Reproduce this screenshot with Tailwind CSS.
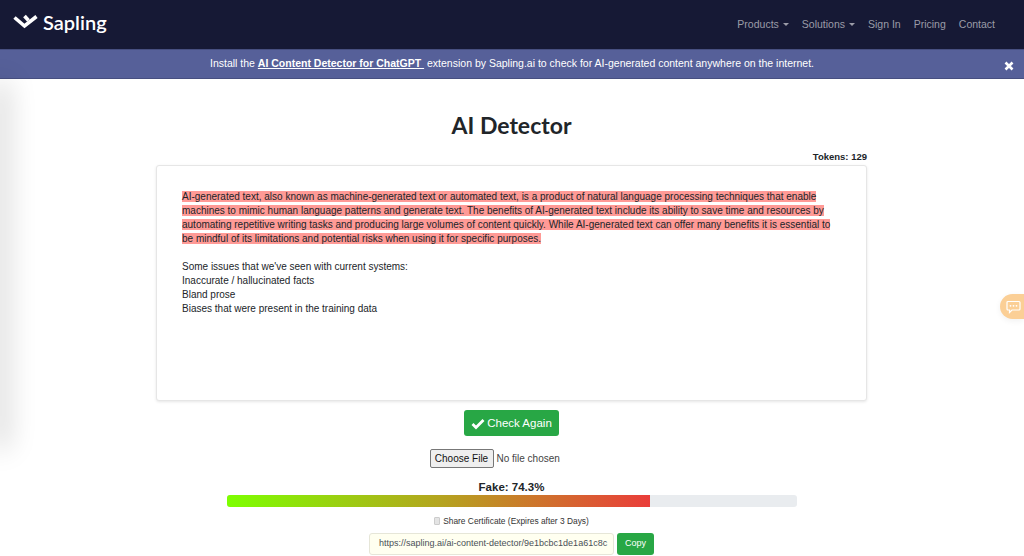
<!DOCTYPE html>
<html>
<head>
<meta charset="utf-8">
<script src="https://cdn.jsdelivr.net/npm/@tailwindcss/browser@4"></script>
</head>
<body class="relative h-[556px] overflow-hidden bg-white font-['Liberation_Sans',sans-serif] text-[#212529]">
<nav class="flex h-[49px] items-center justify-between bg-[#161935] pl-[12px] pr-[29px]">
  <div class="flex items-center gap-[4px] pb-[6px]">
    <svg class="h-[16px] w-[27px]" viewBox="0 0 27 16" fill="none"><path d="M2.5 3.5 L12.5 12 L24.5 2.5" stroke="#fff" stroke-width="3.6" stroke-linejoin="miter"/><path d="M12.5 2 L16.5 6.5" stroke="#fff" stroke-width="3.6"/></svg>
    <span class="font-['Lato',sans-serif] text-[20px] font-semibold leading-none text-white">Sapling</span>
  </div>
  <div class="flex items-center gap-[13px] text-[10.5px] text-[#9b9ca8]">
    <span class="flex items-center gap-[4px]">Products <span class="border-x-[3px] border-t-[3px] border-x-transparent border-t-[#9b9ca8]"></span></span>
    <span class="flex items-center gap-[4px]">Solutions <span class="border-x-[3px] border-t-[3px] border-x-transparent border-t-[#9b9ca8]"></span></span>
    <span>Sign In</span>
    <span>Pricing</span>
    <span>Contact</span>
  </div>
</nav>
<div class="relative flex h-[30px] items-center justify-center border-y border-y-[#474f80] bg-[#566099] text-[10.5px] text-white">
  <p>Install the <a class="font-bold underline">AI Content Detector for ChatGPT&nbsp;</a> extension by Sapling.ai to check for AI-generated content anywhere on the internet.</p>
  <svg class="absolute right-[10px] top-[11px] h-[10px] w-[10px]" viewBox="0 0 10 10"><path d="M1.5 1.5 L8.5 8.5 M8.5 1.5 L1.5 8.5" stroke="#fff" stroke-width="2.6"/></svg>
</div>
<div class="absolute left-0 top-[90px] h-[350px] w-0 shadow-[0_0_28px_8px_rgba(0,0,0,0.18)]"></div>
<main class="ml-[156px] flex w-[711px] flex-col items-center">
  <h1 class="mt-[31px] font-['Lato',sans-serif] text-[23px] font-bold leading-[30px] text-[#212529]">AI Detector</h1>
  <div class="mt-[11px] w-full text-right text-[9.5px] font-bold leading-[12px]">Tokens: 129</div>
  <div class="mt-[2px] h-[236px] w-full rounded-[3px] border border-[#e6e6e6] bg-white px-[25px] pt-[24px] text-[10px] leading-[14px] text-[#212529] shadow-[0_1px_3px_rgba(0,0,0,0.1)]">
    <p><span class="bg-[#ff9a96]">AI-generated text, also known as machine-generated text or automated text, is a product of natural language processing techniques that enable<br>machines to mimic human language patterns and generate text. The benefits of AI-generated text include its ability to save time and resources by<br>automating repetitive writing tasks and producing large volumes of content quickly. While AI-generated text can offer many benefits it is essential to<br>be mindful of its limitations and potential risks when using it for specific purposes.</span></p>
    <p class="mt-[14px]">Some issues that we've seen with current systems:<br>Inaccurate / hallucinated facts<br>Bland prose<br>Biases that were present in the training data</p>
  </div>
  <button class="mt-[9px] flex h-[26px] w-[95px] items-center justify-center gap-[2px] rounded-[3px] bg-[#28a745] pt-[1px] text-[11.5px] text-white">
    <svg class="h-[12px] w-[14px]" viewBox="0 0 14 12" fill="none"><path d="M1.5 6 L5 9.5 L12.5 2" stroke="#fff" stroke-width="2.8"/></svg>Check Again</button>
  <div class="mt-[13px] flex h-[19px] w-[164px] items-center gap-[3px] text-[10px] text-[#444]">
    <span class="flex h-[19px] w-[64px] items-center justify-center rounded-[2px] border border-[#777] bg-[#efefef] text-[#111]">Choose File</span>
    <span>No file chosen</span>
  </div>
  <div class="mt-[12px] text-[11.5px] font-bold leading-[14px]">Fake: 74.3%</div>
  <div class="mt-[1px] flex h-[12px] w-[570px] overflow-hidden rounded-[3px] bg-[#e9ecef]">
    <div class="h-full w-[423px] bg-[linear-gradient(90deg,#7dff00,#b4a51f_50%,#ea3d3a)]"></div>
  </div>
  <div class="mt-[8px] flex items-center gap-[3px] text-[8.4px] leading-[12px] text-[#333]">
    <span class="h-[8px] w-[6px] rounded-[1px] border border-[#ccc] bg-[#e4e4e4]"></span>Share Certificate (Expires after 3 Days)
  </div>
  <div class="mt-[6px] flex gap-[3px]">
    <div class="flex h-[22px] w-[245px] items-center overflow-hidden rounded-[3px] border border-[#e6e6d8] bg-[#fffff0] px-[9px] text-[9px] whitespace-nowrap text-[#495057]">https://sapling.ai/ai-content-detector/9e1bcbc1de1a61c8c</div>
    <div class="flex h-[22px] w-[37px] items-center justify-center rounded-[3px] bg-[#28a745] text-[9px] text-white">Copy</div>
  </div>
</main>
<div class="absolute right-0 top-[294px] flex h-[25px] w-[24px] items-center justify-center rounded-l-[13px] bg-[#fbcf96] shadow-[0_2px_6px_rgba(0,0,0,0.06)]">
  <svg class="ml-[2px] h-[14px] w-[15px]" viewBox="0 0 15 14" fill="none"><path d="M2 1.5 H13 A1 1 0 0 1 14 2.5 V9 A1 1 0 0 1 13 10 H6 L3.5 12.5 V10 H2 A1 1 0 0 1 1 9 V2.5 A1 1 0 0 1 2 1.5 Z" stroke="#fff" stroke-width="1.2"/><circle cx="4.5" cy="5.8" r=".9" fill="#fff"/><circle cx="7.5" cy="5.8" r=".9" fill="#fff"/><circle cx="10.5" cy="5.8" r=".9" fill="#fff"/></svg>
</div>
</body>
</html>
